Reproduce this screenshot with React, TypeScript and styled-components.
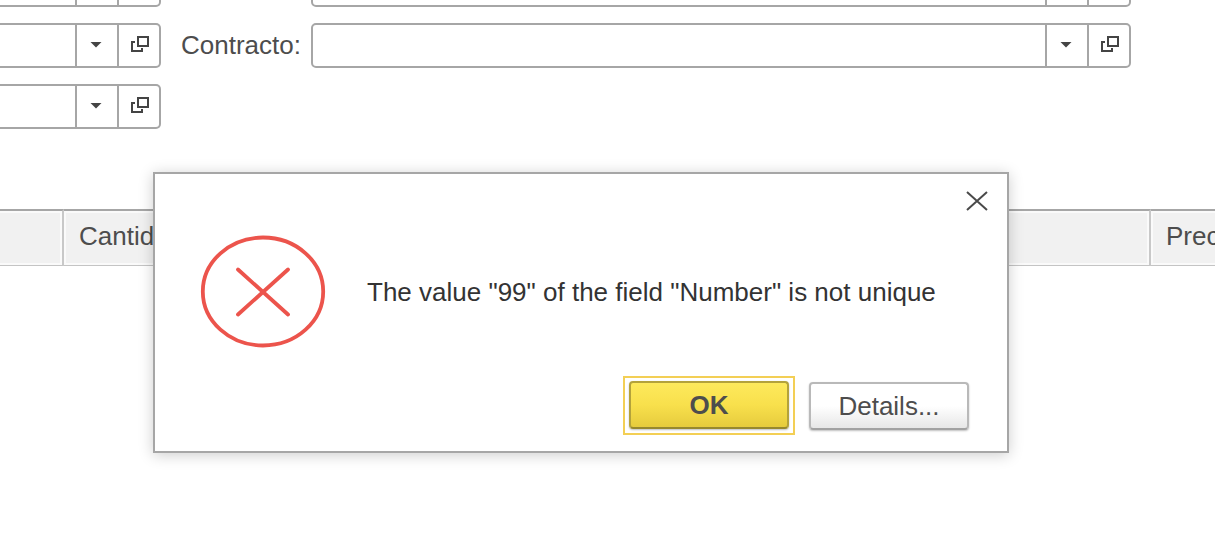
import React from "react";
import styled, { createGlobalStyle, css } from "styled-components";

const GlobalStyle = createGlobalStyle`
  *, *::before, *::after { box-sizing: border-box; }
  body {
    margin: 0;
    background: #fff;
    color: #4d4d4d;
    font: 26px/30px "Liberation Sans", Arial, sans-serif;
    overflow: hidden;
  }
  button, input { font: inherit; color: inherit; }
`;

const Page = styled.main`
  position: relative;
  min-height: 100vh;
  overflow: hidden;
`;

const Form = styled.form`
  display: flex;
  flex-direction: column;
  gap: 16px;
  padding-right: 84px;
`;

const FormRow = styled.div<{ $cut?: boolean }>`
  display: grid;
  grid-template-columns: 161px minmax(0, 1fr);
  column-gap: 20px;
  align-items: center;
  ${(p) =>
    p.$cut &&
    css`
      height: 7px;
      align-content: end;
      overflow: hidden;
    `}
`;

const Labelled = styled.div`
  display: grid;
  grid-template-columns: 130px minmax(0, 1fr);
  align-items: center;
`;

const Label = styled.label`
  padding-bottom: 2px;
  white-space: nowrap;
`;

const FieldBox = styled.div<{ $open?: boolean }>`
  display: flex;
  height: 45px;
  border: 2px solid #a6a6a6;
  border-radius: 5px;
  background: #fff;
  overflow: hidden;
  ${(p) =>
    p.$open &&
    css`
      border-left: 0;
      border-top-left-radius: 0;
      border-bottom-left-radius: 0;
    `}
`;

const FieldInput = styled.input`
  flex: 1;
  min-width: 0;
  padding: 0 10px;
  border: 0;
  outline: 0;
  background: transparent;
`;

const FieldButton = styled.button`
  display: flex;
  flex: none;
  align-items: center;
  justify-content: center;
  width: 42px;
  padding: 0 2px 2px 0;
  border: 0;
  border-left: 2px solid #a6a6a6;
  background: transparent;
`;

const Table = styled.table`
  width: 100%;
  margin-top: 80px;
  border-collapse: separate;
  border-spacing: 0;
  table-layout: fixed;
`;

const HeadCell = styled.th<{ $width?: number }>`
  width: ${(p) => (p.$width ? `${p.$width}px` : "auto")};
  height: 57px;
  padding: 0 0 4px 15px;
  border-top: 2px solid #a6a6a6;
  border-bottom: 1px solid #c4c4c4;
  border-right: 2px solid #c8c8c8;
  background: #f1f1f1;
  box-shadow: inset 0 0 0 2px #fafafa;
  font-weight: 400;
  text-align: left;
  white-space: nowrap;
  overflow: hidden;

  &:first-child { box-shadow: inset -2px -2px #fafafa, inset 0 2px #fafafa; }
  &:last-child {
    border-right: 0;
    box-shadow: inset 2px 2px #fafafa, inset 0 -2px #fafafa;
  }
`;

const Dialog = styled.section`
  position: absolute;
  top: 172px;
  left: 153px;
  right: 206px;
  display: flex;
  flex-direction: column;
  padding: 14px 16px 16px 45px;
  border: 2px solid #a6a6a6;
  background: #fff;
  box-shadow: 0 2px 14px rgba(0, 0, 0, 0.2);
`;

const CloseButton = styled.button`
  display: flex;
  align-self: flex-end;
  padding: 3px;
  border: 0;
  background: transparent;
`;

const Message = styled.div`
  display: flex;
  align-items: center;
  gap: 41px;
  margin-top: 21px;
`;

const MessageText = styled.p`
  margin: 0;
  color: #333;
  white-space: nowrap;
`;

const Actions = styled.div`
  display: flex;
  justify-content: flex-end;
  align-items: center;
  gap: 14px;
  margin-top: 28px;
  padding-right: 22px;
`;

const FocusRing = styled.div`
  padding: 3px 4px 4px;
  border: 2px solid #f3cf55;
`;

const ActionButton = styled.button<{ $primary?: boolean }>`
  display: block;
  width: 160px;
  height: 48px;
  padding: 0;
  border: 2px solid #b9b9b9;
  border-bottom-color: #a2a2a2;
  border-radius: 4px;
  background: linear-gradient(#fff 0%, #fff 50%, #e7e7e7 100%);
  box-shadow: 0 1px 2px rgba(0, 0, 0, 0.25);
  color: #4d4d4d;
  ${(p) =>
    p.$primary &&
    css`
      border-color: #b3a23b;
      border-bottom-color: #97882e;
      background: linear-gradient(#fde95c 0%, #f8e04c 50%, #e6cb3d 100%);
      font-weight: 700;
    `}
`;

const ArrowIcon = () => (
  <svg width="12" height="7" viewBox="0 0 12 7" aria-hidden="true">
    <path d="M.5 1h11L6 6.5z" fill="#444" />
  </svg>
);

const OpenIcon = () => (
  <svg width="24" height="20" viewBox="0 0 24 20" fill="none" stroke="#444" strokeWidth="2" aria-hidden="true">
    <path d="M12 2h10v9H12zM9 7H6v9h10v-3" />
  </svg>
);

const CloseIcon = () => (
  <svg width="22" height="20" viewBox="0 0 22 20" fill="none" stroke="#4a4a4a" strokeWidth="2" aria-hidden="true">
    <path d="M1 1l20 18M21 1L1 19" />
  </svg>
);

const ErrorIcon = () => (
  <svg width="126" height="113" viewBox="0 0 126 113" fill="none" stroke="#ec544c" strokeWidth="3.8" aria-hidden="true">
    <ellipse cx="63" cy="56.5" rx="60.2" ry="54" />
    <path d="M38 34.5l50 45M88 34.5l-50 45" strokeLinecap="round" />
  </svg>
);

function ReferenceField({ id, name, open }: { id: string; name?: string; open?: boolean }) {
  return (
    <FieldBox $open={open}>
      <FieldInput id={id} type="text" aria-label={name} />
      <FieldButton type="button" aria-label="Select">
        <ArrowIcon />
      </FieldButton>
      <FieldButton type="button" aria-label="Open">
        <OpenIcon />
      </FieldButton>
    </FieldBox>
  );
}

export default function App() {
  return (
    <Page>
      <GlobalStyle />
      <Form>
        <FormRow $cut>
          <ReferenceField id="organization" name="Organization" open />
          <Labelled>
            <span />
            <ReferenceField id="partner" name="Partner" />
          </Labelled>
        </FormRow>
        <FormRow>
          <ReferenceField id="warehouse" name="Warehouse" open />
          <Labelled>
            <Label htmlFor="contract">Contracto:</Label>
            <ReferenceField id="contract" />
          </Labelled>
        </FormRow>
        <FormRow>
          <ReferenceField id="currency" name="Currency" open />
        </FormRow>
      </Form>

      <Table>
        <thead>
          <tr>
            <HeadCell $width={64} />
            <HeadCell>Cantidad</HeadCell>
            <HeadCell $width={64}>Precio</HeadCell>
          </tr>
        </thead>
      </Table>

      <Dialog role="alertdialog" aria-labelledby="message">
        <CloseButton type="button" aria-label="Close">
          <CloseIcon />
        </CloseButton>
        <Message>
          <ErrorIcon />
          <MessageText id="message">The value "99" of the field "Number" is not unique</MessageText>
        </Message>
        <Actions>
          <FocusRing>
            <ActionButton type="button" $primary>OK</ActionButton>
          </FocusRing>
          <ActionButton type="button">Details...</ActionButton>
        </Actions>
      </Dialog>
    </Page>
  );
}
